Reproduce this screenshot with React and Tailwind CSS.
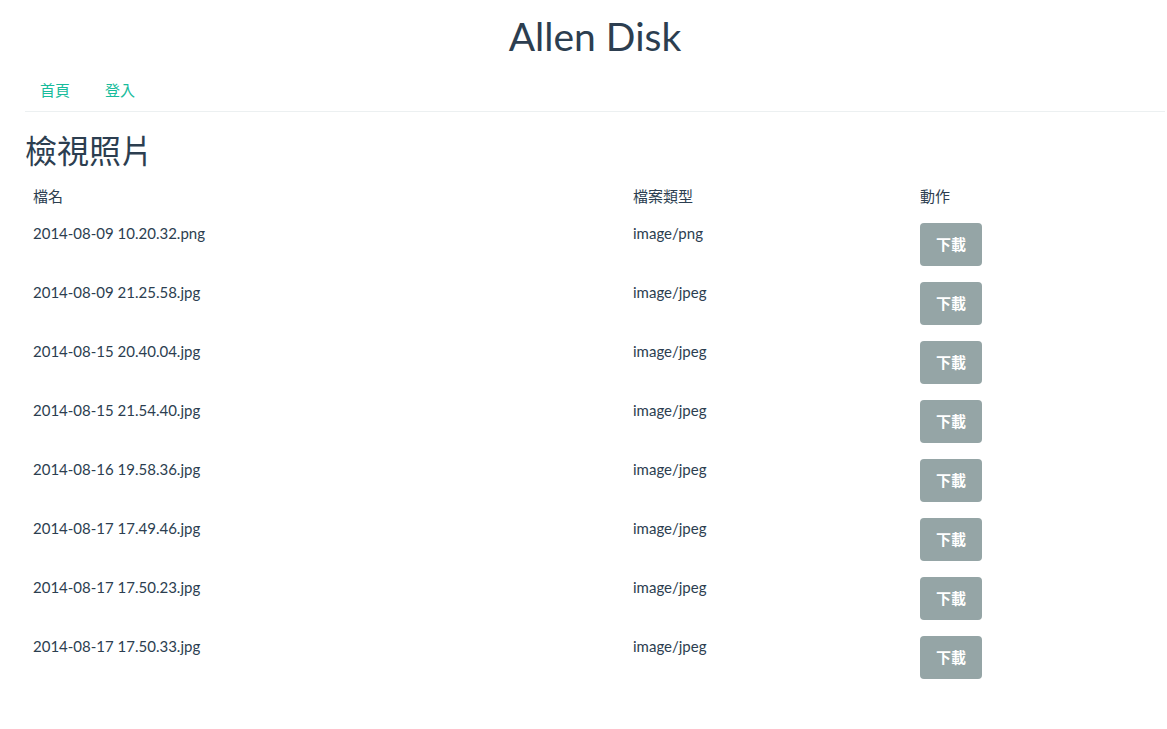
import React from 'react'

const files = [
  { name: '2014-08-09 10.20.32.png', type: 'image/png' },
  { name: '2014-08-09 21.25.58.jpg', type: 'image/jpeg' },
  { name: '2014-08-15 20.40.04.jpg', type: 'image/jpeg' },
  { name: '2014-08-15 21.54.40.jpg', type: 'image/jpeg' },
  { name: '2014-08-16 19.58.36.jpg', type: 'image/jpeg' },
  { name: '2014-08-17 17.49.46.jpg', type: 'image/jpeg' },
  { name: '2014-08-17 17.50.23.jpg', type: 'image/jpeg' },
  { name: '2014-08-17 17.50.33.jpg', type: 'image/jpeg' },
]

export default function App() {
  return (
    <div
      className="min-h-screen bg-white pl-[25px] pr-[2px] text-[15px] leading-[21px] text-[#2c3e50]"
      style={{ fontFamily: 'Lato, "Noto Sans CJK TC", sans-serif' }}
    >
      {/* Header */}
      <h1 className="pt-[15px] pb-[12px] text-center text-[39px] leading-[43px] font-normal">Allen Disk</h1>

      {/* Nav */}
      <ul className="flex gap-[5px] border-b border-[#ecf0f1]">
        <li>
          <a href="#" className="block px-[15px] py-[10px] text-[#18bc9c]">首頁</a>
        </li>
        <li>
          <a href="#" className="block px-[15px] py-[10px] text-[#18bc9c]">登入</a>
        </li>
      </ul>

      <h2 className="mt-[21px] mb-[10px] text-[32px] leading-[35px] font-normal">檢視照片</h2>

      {/* Files table */}
      <table className="w-full table-fixed border-collapse">
        <thead>
          <tr>
            <th className="w-[600px] p-[8px] text-left font-normal align-top">檔名</th>
            <th className="w-[287px] p-[8px] text-left font-normal align-top">檔案類型</th>
            <th className="p-[8px] text-left font-normal align-top">動作</th>
          </tr>
        </thead>
        <tbody>
          {files.map((f) => (
            <tr key={f.name}>
              <td className="p-[8px] align-top">{f.name}</td>
              <td className="p-[8px] align-top">{f.type}</td>
              <td className="p-[8px] align-top">
                <button className="flex h-[43px] w-[62px] items-center justify-center rounded-[4px] bg-[#95a5a6] font-bold text-white">
                  下載
                </button>
              </td>
            </tr>
          ))}
        </tbody>
      </table>
    </div>
  )
}
